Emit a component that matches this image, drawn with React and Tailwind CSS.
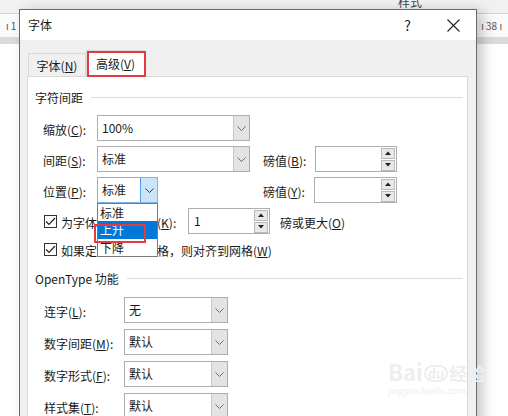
import React from "react";

const font = { fontFamily: '"Noto Sans CJK SC", "Noto Sans", sans-serif' };

const Chevron = ({ color = "#6b6b6b" }) => (
  <svg width="9" height="5" viewBox="0 0 9 5">
    <polyline points="0.5,0.5 4.5,4.5 8.5,0.5" fill="none" stroke={color} strokeWidth="1" />
  </svg>
);

const Combo = ({ value, className = "", open = false }) => (
  <div className={`flex h-[26px] border bg-white ${open ? "border-[#7eb4ea]" : "border-[#adadad]"} ${className}`}>
    <div className="flex-1 flex items-center pl-[4px] text-[12px] text-[#1a1a1a]">{value}</div>
    {open ? (
      <div className="w-[17px] flex items-center justify-center bg-[#cce4f7] border-l border-[#569de5]">
        <Chevron color="#3a3a3a" />
      </div>
    ) : (
      <div className="w-[16px] flex items-center justify-center bg-[#e3e3e3] border-l border-[#c8c8c8]">
        <Chevron />
      </div>
    )}
  </div>
);

const SpinBtn = ({ up }) => (
  <div className="h-[11px] w-[14px] flex items-center justify-center bg-[#e8e8e8] border border-[#b9b9b9]">
    <svg width="6" height="4" viewBox="0 0 6 4">
      {up ? <polygon points="0,4 3,0.5 6,4" fill="#222" /> : <polygon points="0,0 3,3.5 6,0" fill="#222" />}
    </svg>
  </div>
);

const Spin = ({ value = "", className = "" }) => (
  <div className={`flex h-[26px] border border-[#adadad] bg-white ${className}`}>
    <div className="flex-1 flex items-center pl-[5px] text-[12px] text-[#1a1a1a]">{value}</div>
    <div className="flex flex-col justify-center gap-[1px] pr-[1px]">
      <SpinBtn up />
      <SpinBtn />
    </div>
  </div>
);

const Check = () => (
  <div className="w-[13px] h-[13px] border border-[#333] bg-white flex items-center justify-center">
    <svg width="11" height="9" viewBox="0 0 11 9">
      <polyline points="1,4.5 4,7.5 10,1" fill="none" stroke="#222" strokeWidth="1.2" />
    </svg>
  </div>
);

const Label = ({ text, k, rest = "):" }) => (
  <span className="text-[12px] text-[#1a1a1a] whitespace-nowrap">
    {text}(<u>{k}</u>{rest}
  </span>
);

const GroupHeader = ({ title }) => (
  <div className="flex items-center pl-[7px] pr-[4px] h-[16px]">
    <span className="text-[12px] text-[#1a1a1a] leading-[16px] whitespace-nowrap">{title}</span>
    <div className="flex-1 h-px bg-[#dcdcdc] ml-[8px] -mt-[2px]" />
  </div>
);

export default function App() {
  return (
    <div className="relative w-[508px] h-[416px] overflow-hidden bg-white" style={font}>
      {/* word window behind */}
      <div className="flex flex-col">
        <div className="h-[13px] bg-[#f1f1f1] relative">
          <span className="absolute left-[398px] -top-[7px] text-[12px] text-[#444]">样式</span>
        </div>
        <div className="h-px bg-[#d4d4d4]" />
        <div className="h-[23px] bg-[#fafafa] flex items-center justify-between px-[6px] text-[10px] text-[#555]">
          <span>ı 1</span>
          <span>ı 38 ı</span>
        </div>
        <div className="h-[7px] bg-[#dadada]" />
      </div>

      {/* dialog */}
      <div className="absolute left-[19px] top-[9px] w-[458px] h-[420px] border border-[#6a6a6a] bg-[#f0f0f0] flex flex-col shadow-[6px_2px_12px_rgba(0,0,0,0.22)]">
        <div className="h-[30px] bg-white flex items-center pl-[8px] shrink-0">
          <span className="text-[12px] text-[#1a1a1a]">字体</span>
          <span className="ml-auto text-[14px] text-[#222] mr-[36px]">?</span>
          <svg width="13" height="13" viewBox="0 0 13 13" className="mr-[16px]">
            <path d="M0.5 0.5 L12.5 12.5 M12.5 0.5 L0.5 12.5" stroke="#222" strokeWidth="1.1" />
          </svg>
        </div>

        <div className="flex-1 flex flex-col pt-[10px] pl-[7px] pr-[8px]">
          <div className="flex items-end h-[27px] ml-[1px]">
            <div className="w-[58px] h-[24px] border border-b-0 border-[#d9d9d9] bg-[#f0f0f0] flex items-center justify-center text-[12px] text-[#1a1a1a]">
              <span>字体(<u>N</u>)</span>
            </div>
            <div className="relative z-10 w-[59px] h-[27px] border border-b-0 border-[#d9d9d9] bg-white flex items-center justify-center text-[12px] text-[#1a1a1a]">
              <span>高级(<u>V</u>)</span>
              <div className="absolute left-0 top-0 w-[59px] h-[26px] border-2 border-[#e33b3f]" />
            </div>
          </div>

          <div className="-mt-px flex-1 bg-white border border-[#d9d9d9] flex flex-col pt-[13px]">
            <GroupHeader title="字符间距" />

            <div className="flex flex-col gap-[5px] mt-[9px] pl-[15px]">
              <div className="flex items-center">
                <div className="w-[54px]"><Label text="缩放" k="C" /></div>
                <Combo value="100%" className="w-[153px]" />
              </div>
              <div className="flex items-center">
                <div className="w-[54px]"><Label text="间距" k="S" /></div>
                <Combo value="标准" className="w-[153px]" />
                <div className="w-[52px] ml-[13px]"><Label text="磅值" k="B" /></div>
                <Spin className="w-[82px]" />
              </div>
              <div className="flex items-center">
                <div className="w-[54px]"><Label text="位置" k="P" /></div>
                <div className="w-[153px] relative">
                  <Combo value="标准" className="w-[61px]" open />
                  <div className="absolute left-0 top-full z-20 w-[61px] border border-[#7a7a7a] bg-white flex flex-col text-[12px]">
                    <div className="h-[17px] flex items-center pl-[2px] text-[#1a1a1a]">标准</div>
                    <div className="h-[18px] flex items-center pl-[2px] bg-[#0078d7] text-white">上升</div>
                    <div className="h-[17px] flex items-center pl-[2px] text-[#1a1a1a]">下降</div>
                    <div className="absolute -left-[4px] top-[20px] w-[52px] h-[19px] border-2 border-[#e33b3f]" />
                  </div>
                </div>
                <div className="w-[51px] ml-[13px]"><Label text="磅值" k="Y" /></div>
                <Spin className="w-[83px]" />
              </div>
              <div className="flex items-center">
                <div className="w-[145px] flex items-center pl-[1px]">
                  <Check />
                  <span className="ml-[4px]"><Label text="为字体调整字间距" k="K" /></span>
                </div>
                <Spin value="1" className="w-[82px]" />
                <span className="ml-[10px]"><Label text="磅或更大" k="O" rest=")" /></span>
              </div>
            </div>
            <div className="flex items-center h-[26px] mt-[2px] pl-[16px]">
              <Check />
              <span className="ml-[4px]"><Label text="如果定义了文档网格，则对齐到网格" k="W" rest=")" /></span>
            </div>

            <div className="mt-[9px]">
              <GroupHeader title="OpenType 功能" />
            </div>

            <div className="flex flex-col gap-[6px] mt-[10px] pl-[16px]">
              <div className="flex items-center">
                <div className="w-[80px]"><Label text="连字" k="L" /></div>
                <Combo value="无" className="w-[104px]" />
              </div>
              <div className="flex items-center">
                <div className="w-[80px]"><Label text="数字间距" k="M" /></div>
                <Combo value="默认" className="w-[104px]" />
              </div>
              <div className="flex items-center">
                <div className="w-[80px]"><Label text="数字形式" k="F" /></div>
                <Combo value="默认" className="w-[104px]" />
              </div>
              <div className="flex items-center">
                <div className="w-[80px]"><Label text="样式集" k="T" /></div>
                <Combo value="默认" className="w-[104px]" />
              </div>
            </div>
          </div>
        </div>
      </div>

      {/* watermark */}
      <div className="absolute left-[388px] top-[360px] flex flex-col items-start text-[#eeeeee] pointer-events-none">
        <div className="flex items-end leading-none">
          <span className="text-[22px] font-bold">Bai</span>
          <span className="text-[13px] font-bold border-2 border-[#eeeeee] rounded-full px-[2px] mx-[1px]">du</span>
          <span className="text-[18px] font-bold">经验</span>
        </div>
        <span className="text-[9px] mt-[2px]">jingyan.baidu.com</span>
      </div>
    </div>
  );
}
